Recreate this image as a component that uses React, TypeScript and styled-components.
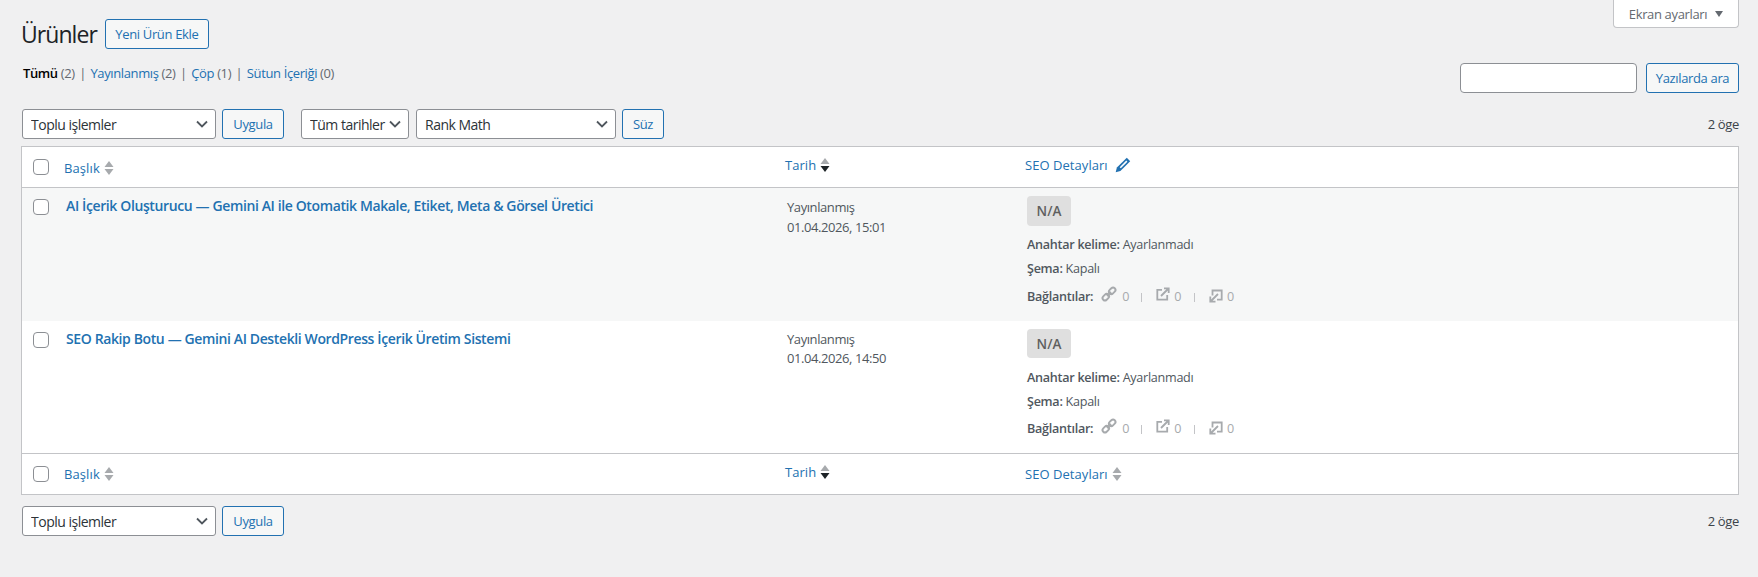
import React from "react";
import styled, { createGlobalStyle } from "styled-components";

const Global = createGlobalStyle`
  html, body { margin: 0; padding: 0; background: #f0f0f1; }
  body { font-family: "Open Sans", "Noto Sans", sans-serif; font-size: 13px; color: #3c434a; letter-spacing: -0.35px; }
  * { box-sizing: border-box; }
`;

const Page = styled.div`
  width: 1758px;
  height: 577px;
  padding: 0 19px 0 21px;
  overflow: hidden;
`;
const ScreenRow = styled.div`
  display: flex;
  justify-content: flex-end;
  height: 19px;
`;
const ScreenTab = styled.button`
  width: 126px;
  height: 28px;
  flex: none;
  display: flex;
  align-items: center;
  justify-content: center;
  gap: 8px;
  background: #fff;
  border: 1px solid #c3c4c7;
  border-top: none;
  border-radius: 0 0 4px 4px;
  color: #646970;
  font: inherit;
  font-size: 13px;
  letter-spacing: inherit;
  padding: 0;
`;
const Caret = styled.span`
  width: 0;
  height: 0;
  border-left: 4.5px solid transparent;
  border-right: 4.5px solid transparent;
  border-top: 6px solid #646970;
`;
const Heading = styled.div`
  display: flex;
  align-items: center;
  gap: 8px;
  height: 30px;
`;
const Title = styled.h1`
  margin: 0;
  font-size: 23px;
  font-weight: 400;
  color: #1d2327;
  letter-spacing: -0.95px;
`;
const Btn = styled.button<{ $w: number }>`
  width: ${(p) => p.$w}px;
  height: 30px;
  flex: none;
  padding: 0;
  background: #f6f7f7;
  border: 1px solid #2271b1;
  border-radius: 3px;
  color: #2271b1;
  font: inherit;
  font-size: 13px;
  letter-spacing: inherit;
`;
const SearchRow = styled.div`
  display: flex;
  justify-content: space-between;
  height: 30px;
  margin-top: 14px;
`;
const Subsub = styled.div`
  display: flex;
  align-items: center;
  height: 20px;
  padding-left: 2px;
  color: #646970;
  letter-spacing: -0.38px;
`;
const Sep = styled.span`
  margin: 0 4.5px;
  color: #646970;
`;
const SubLink = styled.a<{ $current?: boolean }>`
  color: ${(p) => (p.$current ? "#000" : "#2271b1")};
  font-weight: ${(p) => (p.$current ? 600 : 400)};
  margin-right: 3px;
`;
const SearchBox = styled.div`
  display: flex;
  gap: 9px;
`;
const SearchInput = styled.input`
  width: 177px;
  height: 30px;
  background: #fff;
  border: 1px solid #8c8f94;
  border-radius: 4px;
`;
const Toolbar = styled.div<{ $bottom?: boolean }>`
  display: flex;
  align-items: center;
  height: 30px;
  margin-top: ${(p) => (p.$bottom ? 11 : 16)}px;
  padding-left: 1px;
`;
const chevron = `url("data:image/svg+xml,%3Csvg xmlns='http://www.w3.org/2000/svg' width='12' height='8' viewBox='0 0 12 8'%3E%3Cpath d='M1 1.5l5 5 5-5' fill='none' stroke='%2350575e' stroke-width='1.8'/%3E%3C/svg%3E")`;
const Select = styled.select<{ $w: number; $ml?: number }>`
  appearance: none;
  width: ${(p) => p.$w}px;
  margin-left: ${(p) => p.$ml ?? 0}px;
  height: 30px;
  flex: none;
  padding: 0 20px 0 8px;
  background: #fff ${chevron} no-repeat right 7px center;
  border: 1px solid #8c8f94;
  border-radius: 3px;
  color: #2c3338;
  font: inherit;
  font-size: 14px;
  letter-spacing: -0.5px;
`;
const ApplyBtn = styled(Btn)<{ $ml: number }>`
  margin-left: ${(p) => p.$ml}px;
`;
const Count = styled.span`
  margin-left: auto;
  color: #3c434a;
`;
const Table = styled.table`
  width: 1718px;
  margin-top: 7px;
  table-layout: fixed;
  border-collapse: separate;
  border-spacing: 0;
  background: #fff;
  border: 1px solid #c3c4c7;
`;
const CheckCol = styled.col`
  width: 34px;
`;
const TitleCol = styled.col`
  width: 721px;
`;
const DateCol = styled.col`
  width: 240px;
`;
const HeadCell = styled.th<{ $line?: "top" | "bottom" }>`
  height: 41px;
  padding: 0;
  font-weight: 400;
  text-align: left;
  vertical-align: middle;
  ${(p) => p.$line === "top" && "border-top: 1px solid #c3c4c7;"}
  ${(p) => p.$line === "bottom" && "border-bottom: 1px solid #c3c4c7;"}
`;
const Box = styled.input.attrs({ type: "checkbox" })<{ $mt?: number }>`
  appearance: none;
  display: block;
  width: 16px;
  height: 16px;
  margin: ${(p) => p.$mt ?? 0}px 0 0 11px;
  background: #fff;
  border: 1px solid #8c8f94;
  border-radius: 4px;
`;
const SortLink = styled.a<{ $raise?: number; $wide?: boolean }>`
  display: inline-flex;
  align-items: center;
  gap: 4px;
  margin-left: 8px;
  color: #2271b1;
  letter-spacing: ${(p) => (p.$wide ? "0.1px" : "0.05px")};
  position: relative;
  top: ${(p) => -(p.$raise ?? 0)}px;
`;
const Row = styled.tr<{ $alt?: boolean }>`
  background: ${(p) => (p.$alt ? "#f6f7f7" : "#fff")};
`;
const Cell = styled.td<{ $h: number; $pt?: number }>`
  height: ${(p) => p.$h}px;
  padding: ${(p) => p.$pt ?? 0}px 10px 0;
  vertical-align: top;
`;
const BoxCell = styled.td`
  padding: 0;
  vertical-align: top;
`;
const RowTitle = styled.a`
  display: block;
  color: #2271b1;
  font-size: 14px;
  font-weight: 600;
  line-height: 19px;
  letter-spacing: -0.38px;
`;
const DateLine = styled.div<{ $lh: number }>`
  line-height: ${(p) => p.$lh}px;
  color: #50575e;
  letter-spacing: -0.42px;
`;
const Badge = styled.div<{ $h: number }>`
  width: 44px;
  height: ${(p) => p.$h}px;
  display: flex;
  align-items: center;
  justify-content: center;
  background: #dfdfdf;
  border-radius: 4px;
  color: #5f5f5f;
  font-size: 13.5px;
  font-weight: 600;
  letter-spacing: 0;
`;
const Meta = styled.div<{ $mt: number }>`
  display: flex;
  align-items: center;
  height: 18px;
  margin-top: ${(p) => p.$mt}px;
  color: #50575e;
  font-size: 12.6px;
  letter-spacing: -0.28px;
`;
const Strong = styled.b`
  font-weight: 600;
  margin-right: 3px;
`;
const Links = styled.span`
  display: inline-flex;
  align-items: center;
  margin-left: 5px;
  color: #a7aaad;
`;
const LinkItem = styled.span`
  display: inline-flex;
  align-items: center;
  gap: 4px;
`;
const Bar = styled.span<{ $ml: number }>`
  width: 1px;
  height: 9px;
  margin: 2px 14px 0 ${(p) => p.$ml}px;
  background: #c3c4c7;
`;

const Sort = ({ dark }: { dark?: boolean }) => (
  <svg width="10" height="16" viewBox="0 0 10 16">
    <path d="M5 1l4.5 6h-9z" fill="#a7aaad" />
    <path d="M5 15L.5 9h9z" fill={dark ? "#1d2327" : "#a7aaad"} />
  </svg>
);
const Pencil = () => (
  <svg width="16" height="16" viewBox="0 0 16 16" style={{ marginLeft: 3 }}>
    <path d="M11.8.8l3.4 3.4-9.8 9.8-4.7 1.2 1.2-4.7z" fill="#2271b1" />
    <path d="M11.3 3.6l1.1 1.1-6.6 6.6-1.1-1.1z" fill="#fff" />
  </svg>
);
const LinkIcon = () => (
  <svg width="16" height="16" viewBox="0 0 16 16" fill="none" stroke="#a7aaad" strokeWidth="1.9" style={{ marginTop: -5, marginRight: 1 }}>
    <rect x="-3.6" y="-2.4" width="7.2" height="4.8" rx="2.4" transform="translate(4.8 11.2) rotate(-45)" />
    <rect x="-3.6" y="-2.4" width="7.2" height="4.8" rx="2.4" transform="translate(11.2 4.8) rotate(-45)" />
    <path d="M6 10l4-4" />
  </svg>
);
const External = () => (
  <svg width="14" height="14" viewBox="0 0 14 14" fill="none" stroke="#a7aaad" strokeWidth="1.8" style={{ marginTop: -4 }}>
    <path d="M6 2.8H1.3v9.9h9.9V8" />
    <path d="M5 9l7-7M8 1.3h4.7V6" />
  </svg>
);
const Internal = () => (
  <svg width="14" height="14" viewBox="0 0 14 14" fill="none" stroke="#a7aaad" strokeWidth="1.8" style={{ marginTop: -1 }}>
    <path d="M3.5 6.5V1.5h9.2v9.2H8" />
    <path d="M9 5l-7 7M1.3 7.5v5.2h5.2" />
  </svg>
);

const Seo = ({ first }: { first?: boolean }) => (
  <>
    <Badge $h={first ? 30 : 29}>N/A</Badge>
    <Meta $mt={first ? 9 : 10}>
      <Strong>Anahtar kelime:</Strong> Ayarlanmadı
    </Meta>
    <Meta $mt={6}>
      <Strong>Şema:</Strong> Kapalı
    </Meta>
    <Meta $mt={first ? 10 : 9}>
      <Strong>Bağlantılar:</Strong>
      <Links>
        <LinkItem><LinkIcon />0</LinkItem>
        <Bar $ml={12} />
        <LinkItem><External />0</LinkItem>
        <Bar $ml={13} />
        <LinkItem><Internal />0</LinkItem>
      </Links>
    </Meta>
  </>
);

const Head = ({ line, footer }: { line: "top" | "bottom"; footer?: boolean }) => (
  <tr>
    <HeadCell $line={line}><Box /></HeadCell>
    <HeadCell $line={line}><SortLink $wide $raise={footer ? 0 : -1}>Başlık <Sort /></SortLink></HeadCell>
    <HeadCell $line={line}><SortLink $raise={2}>Tarih <Sort dark /></SortLink></HeadCell>
    <HeadCell $line={line}>
      <SortLink $raise={footer ? 0 : 2}>SEO Detayları {footer ? <Sort /> : <Pencil />}</SortLink>
    </HeadCell>
  </tr>
);

export default function App() {
  return (
    <Page>
      <Global />
      <ScreenRow>
        <ScreenTab>Ekran ayarları <Caret /></ScreenTab>
      </ScreenRow>
      <Heading>
        <Title>Ürünler</Title>
        <Btn $w={104}>Yeni Ürün Ekle</Btn>
      </Heading>
      <SearchRow>
        <Subsub>
          <SubLink $current>Tümü</SubLink> (2)<Sep>|</Sep>
          <SubLink>Yayınlanmış</SubLink> (2)<Sep>|</Sep>
          <SubLink>Çöp</SubLink> (1)<Sep>|</Sep>
          <SubLink>Sütun İçeriği</SubLink> (0)
        </Subsub>
        <SearchBox>
          <SearchInput />
          <Btn $w={93}>Yazılarda ara</Btn>
        </SearchBox>
      </SearchRow>
      <Toolbar>
        <Select $w={194}><option>Toplu işlemler</option></Select>
        <ApplyBtn $w={62} $ml={6}>Uygula</ApplyBtn>
        <Select $w={108} $ml={17}><option>Tüm tarihler</option></Select>
        <Select $w={200} $ml={7}><option>Rank Math</option></Select>
        <ApplyBtn $w={42} $ml={6}>Süz</ApplyBtn>
        <Count>2 öge</Count>
      </Toolbar>
      <Table>
        <colgroup>
          <CheckCol /><TitleCol /><DateCol /><col />
        </colgroup>
        <thead><Head line="bottom" /></thead>
        <tbody>
          <Row $alt>
            <BoxCell><Box $mt={11} /></BoxCell>
            <Cell $h={133} $pt={8}>
              <RowTitle>AI İçerik Oluşturucu — Gemini AI ile Otomatik Makale, Etiket, Meta &amp; Görsel Üretici</RowTitle>
            </Cell>
            <Cell $h={133} $pt={9}>
              <DateLine $lh={20}>Yayınlanmış</DateLine>
              <DateLine $lh={20}>01.04.2026, 15:01</DateLine>
            </Cell>
            <Cell $h={133} $pt={8}><Seo first /></Cell>
          </Row>
          <Row>
            <BoxCell><Box $mt={11} /></BoxCell>
            <Cell $h={132} $pt={8}>
              <RowTitle>SEO Rakip Botu — Gemini AI Destekli WordPress İçerik Üretim Sistemi</RowTitle>
            </Cell>
            <Cell $h={132} $pt={9}>
              <DateLine $lh={19}>Yayınlanmış</DateLine>
              <DateLine $lh={19}>01.04.2026, 14:50</DateLine>
            </Cell>
            <Cell $h={132} $pt={8}><Seo /></Cell>
          </Row>
        </tbody>
        <tfoot><Head line="top" footer /></tfoot>
      </Table>
      <Toolbar $bottom>
        <Select $w={194}><option>Toplu işlemler</option></Select>
        <ApplyBtn $w={62} $ml={6}>Uygula</ApplyBtn>
        <Count>2 öge</Count>
      </Toolbar>
    </Page>
  );
}
